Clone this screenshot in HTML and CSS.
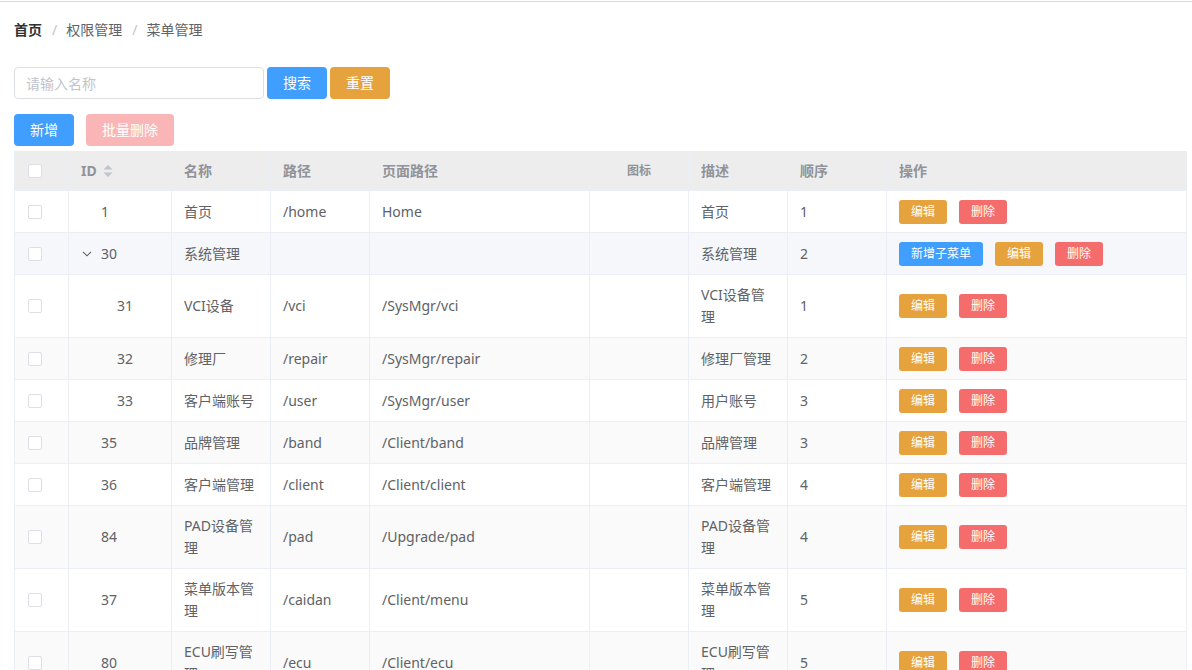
FILE: index.html
```html
<!DOCTYPE html>
<html lang="zh-CN">
<head>
<meta charset="utf-8">
<title>菜单管理</title>
<link rel="stylesheet" href="styles.css">
</head>
<body>
<div class="page">
  <nav class="breadcrumb">
    <span class="crumb first">首页</span><span class="sep">/</span><span class="crumb">权限管理</span><span class="sep">/</span><span class="crumb">菜单管理</span>
  </nav>
  <div class="search-bar">
    <input class="input" type="text" placeholder="请输入名称">
    <button class="btn primary">搜索</button>
    <button class="btn warning">重置</button>
  </div>
  <div class="toolbar">
    <button class="btn primary">新增</button>
    <button class="btn danger-disabled">批量删除</button>
  </div>
  <table class="table">
    <colgroup>
      <col class="c-sel"><col class="c-id"><col class="c-w"><col class="c-w"><col class="c-page"><col class="c-w"><col class="c-w"><col class="c-w"><col class="c-op">
    </colgroup>
    <thead>
      <tr>
        <th class="sel"><span class="checkbox"></span></th>
        <th><div class="cell">ID <svg class="sort" width="10" height="14" viewBox="0 0 10 14"><path d="M5 1 L9.5 5.5 L0.5 5.5 Z" fill="#c0c4cc"/><path d="M0.5 8.5 L9.5 8.5 L5 13 Z" fill="#c0c4cc"/></svg></div></th>
        <th><div class="cell">名称</div></th>
        <th><div class="cell">路径</div></th>
        <th><div class="cell">页面路径</div></th>
        <th><div class="cell center small">图标</div></th>
        <th><div class="cell">描述</div></th>
        <th><div class="cell">顺序</div></th>
        <th><div class="cell">操作</div></th>
      </tr>
    </thead>
    <tbody>
      <tr>
        <td class="sel"><span class="checkbox"></span></td>
        <td><div class="cell id"><span class="tree-ph"></span>1</div></td>
        <td><div class="cell">首页</div></td>
        <td><div class="cell">/home</div></td>
        <td><div class="cell">Home</div></td>
        <td><div class="cell"></div></td>
        <td><div class="cell">首页</div></td>
        <td><div class="cell">1</div></td>
        <td><div class="cell ops"><button class="sbtn warning">编辑</button><button class="sbtn danger">删除</button></div></td>
      </tr>
      <tr class="hover">
        <td class="sel"><span class="checkbox"></span></td>
        <td><div class="cell id"><span class="tree-ph"><svg width="10" height="6" viewBox="0 0 10 6"><path d="M1 0.8 L5 4.8 L9 0.8" fill="none" stroke="#606266" stroke-width="1.1"/></svg></span>30</div></td>
        <td><div class="cell">系统管理</div></td>
        <td><div class="cell"></div></td>
        <td><div class="cell"></div></td>
        <td><div class="cell"></div></td>
        <td><div class="cell">系统管理</div></td>
        <td><div class="cell">2</div></td>
        <td><div class="cell ops"><button class="sbtn primary">新增子菜单</button><button class="sbtn warning">编辑</button><button class="sbtn danger">删除</button></div></td>
      </tr>
      <tr>
        <td class="sel"><span class="checkbox"></span></td>
        <td><div class="cell id"><span class="indent"></span><span class="tree-ph"></span>31</div></td>
        <td><div class="cell">VCI设备</div></td>
        <td><div class="cell">/vci</div></td>
        <td><div class="cell">/SysMgr/vci</div></td>
        <td><div class="cell"></div></td>
        <td><div class="cell">VCI设备管理</div></td>
        <td><div class="cell">1</div></td>
        <td><div class="cell ops"><button class="sbtn warning">编辑</button><button class="sbtn danger">删除</button></div></td>
      </tr>
      <tr class="stripe">
        <td class="sel"><span class="checkbox"></span></td>
        <td><div class="cell id"><span class="indent"></span><span class="tree-ph"></span>32</div></td>
        <td><div class="cell">修理厂</div></td>
        <td><div class="cell">/repair</div></td>
        <td><div class="cell">/SysMgr/repair</div></td>
        <td><div class="cell"></div></td>
        <td><div class="cell">修理厂管理</div></td>
        <td><div class="cell">2</div></td>
        <td><div class="cell ops"><button class="sbtn warning">编辑</button><button class="sbtn danger">删除</button></div></td>
      </tr>
      <tr>
        <td class="sel"><span class="checkbox"></span></td>
        <td><div class="cell id"><span class="indent"></span><span class="tree-ph"></span>33</div></td>
        <td><div class="cell">客户端账号</div></td>
        <td><div class="cell">/user</div></td>
        <td><div class="cell">/SysMgr/user</div></td>
        <td><div class="cell"></div></td>
        <td><div class="cell">用户账号</div></td>
        <td><div class="cell">3</div></td>
        <td><div class="cell ops"><button class="sbtn warning">编辑</button><button class="sbtn danger">删除</button></div></td>
      </tr>
      <tr class="stripe">
        <td class="sel"><span class="checkbox"></span></td>
        <td><div class="cell id"><span class="tree-ph"></span>35</div></td>
        <td><div class="cell">品牌管理</div></td>
        <td><div class="cell">/band</div></td>
        <td><div class="cell">/Client/band</div></td>
        <td><div class="cell"></div></td>
        <td><div class="cell">品牌管理</div></td>
        <td><div class="cell">3</div></td>
        <td><div class="cell ops"><button class="sbtn warning">编辑</button><button class="sbtn danger">删除</button></div></td>
      </tr>
      <tr>
        <td class="sel"><span class="checkbox"></span></td>
        <td><div class="cell id"><span class="tree-ph"></span>36</div></td>
        <td><div class="cell">客户端管理</div></td>
        <td><div class="cell">/client</div></td>
        <td><div class="cell">/Client/client</div></td>
        <td><div class="cell"></div></td>
        <td><div class="cell">客户端管理</div></td>
        <td><div class="cell">4</div></td>
        <td><div class="cell ops"><button class="sbtn warning">编辑</button><button class="sbtn danger">删除</button></div></td>
      </tr>
      <tr class="stripe">
        <td class="sel"><span class="checkbox"></span></td>
        <td><div class="cell id"><span class="tree-ph"></span>84</div></td>
        <td><div class="cell">PAD设备管理</div></td>
        <td><div class="cell">/pad</div></td>
        <td><div class="cell">/Upgrade/pad</div></td>
        <td><div class="cell"></div></td>
        <td><div class="cell">PAD设备管理</div></td>
        <td><div class="cell">4</div></td>
        <td><div class="cell ops"><button class="sbtn warning">编辑</button><button class="sbtn danger">删除</button></div></td>
      </tr>
      <tr>
        <td class="sel"><span class="checkbox"></span></td>
        <td><div class="cell id"><span class="tree-ph"></span>37</div></td>
        <td><div class="cell">菜单版本管理</div></td>
        <td><div class="cell">/caidan</div></td>
        <td><div class="cell">/Client/menu</div></td>
        <td><div class="cell"></div></td>
        <td><div class="cell">菜单版本管理</div></td>
        <td><div class="cell">5</div></td>
        <td><div class="cell ops"><button class="sbtn warning">编辑</button><button class="sbtn danger">删除</button></div></td>
      </tr>
      <tr class="stripe">
        <td class="sel"><span class="checkbox"></span></td>
        <td><div class="cell id"><span class="tree-ph"></span>80</div></td>
        <td><div class="cell">ECU刷写管理</div></td>
        <td><div class="cell">/ecu</div></td>
        <td><div class="cell">/Client/ecu</div></td>
        <td><div class="cell"></div></td>
        <td><div class="cell">ECU刷写管理</div></td>
        <td><div class="cell">5</div></td>
        <td><div class="cell ops"><button class="sbtn warning">编辑</button><button class="sbtn danger">删除</button></div></td>
      </tr>
    </tbody>
  </table>
</div>
</body>
</html>
```

FILE: styles.css
```css
html, body {
  margin: 0;
  padding: 0;
  background: #fff;
  overflow: hidden;
}
body {
  font-family: "Microsoft YaHei", "Noto Sans", "Noto Sans CJK SC", sans-serif;
  font-size: 14px;
  color: #606266;
}
.page {
  margin-top: 1px;
  border-top: 1px solid #d9d9d9;
  padding: 17px 6px 0 14px;
}
.breadcrumb {
  height: 21px;
  line-height: 21px;
  font-size: 14px;
  margin-bottom: 27px;
  white-space: nowrap;
}
.crumb { color: #606266; }
.crumb.first { color: #303133; font-weight: bold; }
.sep { color: #c0c4cc; margin: 0 9px 0 10px; }

.search-bar {
  display: flex;
  gap: 3px;
  height: 32px;
  margin-bottom: 15px;
}
.input {
  box-sizing: border-box;
  width: 250px;
  height: 32px;
  border: 1px solid #dcdfe6;
  border-radius: 4px;
  padding: 0 11px;
  font-family: inherit;
  font-size: 14px;
  color: #606266;
  outline: none;
}
.input::placeholder { color: #c0c4cc; }

.toolbar {
  display: flex;
  gap: 12px;
  height: 32px;
  margin-bottom: 5px;
}
.btn {
  box-sizing: border-box;
  height: 32px;
  padding: 0 16px;
  border: none;
  border-radius: 4px;
  font-family: inherit;
  font-size: 14px;
  line-height: 32px;
  color: #fff;
  cursor: pointer;
}
.btn.primary { background: #409eff; }
.btn.warning { background: #e6a23c; }
.btn.danger-disabled { background: #fab6b6; cursor: not-allowed; }

.table {
  table-layout: fixed;
  border-collapse: separate;
  border-spacing: 0;
  width: 1173px;
  border-left: 1px solid #ebeef5;
}
.c-sel { width: 54px; }
.c-id { width: 103px; }
.c-w { width: 99px; }
.c-page { width: 220px; }
.c-op { width: 300px; }

th, td {
  box-sizing: border-box;
  border-right: 1px solid #ebeef5;
  border-bottom: 1px solid #ebeef5;
  text-align: left;
  vertical-align: middle;
}
th {
  background: #ededed;
  padding: 9px 0;
  color: #909399;
  font-weight: bold;
}
th .cell { line-height: 21px; }
td {
  padding: 9px 0;
}
.cell {
  padding: 0 12px;
  line-height: 22px;
  word-break: break-all;
  white-space: normal;
}
.cell.center { text-align: center; }
.cell.small { font-size: 12px; }
th.sel, td.sel {
  padding-left: 13px;
}
.checkbox {
  display: block;
  box-sizing: border-box;
  width: 14px;
  height: 14px;
  border: 1px solid #dcdfe6;
  border-radius: 2px;
  background: #fff;
}
.sort {
  vertical-align: -2px;
  margin-left: 3px;
}
.cell.id {
  display: flex;
  align-items: center;
}
.indent {
  display: inline-block;
  width: 16px;
  flex: none;
}
.tree-ph {
  display: inline-flex;
  width: 20px;
  flex: none;
  align-items: center;
  justify-content: flex-start;
  padding-left: 1px;
  box-sizing: border-box;
}
tr.stripe td { background: #fafafa; }
tr.hover td { background: #f5f7fa; }

.cell.ops {
  display: flex;
  align-items: center;
  gap: 12px;
  height: 23px;
}
.sbtn {
  box-sizing: border-box;
  flex: none;
  height: 24px;
  padding: 0 12px;
  border: none;
  border-radius: 3px;
  font-family: inherit;
  font-size: 12px;
  line-height: 24px;
  color: #fff;
  cursor: pointer;
}
.sbtn.primary { background: #409eff; }
.sbtn.warning { background: #e6a23c; }
.sbtn.danger { background: #f56c6c; }
```
